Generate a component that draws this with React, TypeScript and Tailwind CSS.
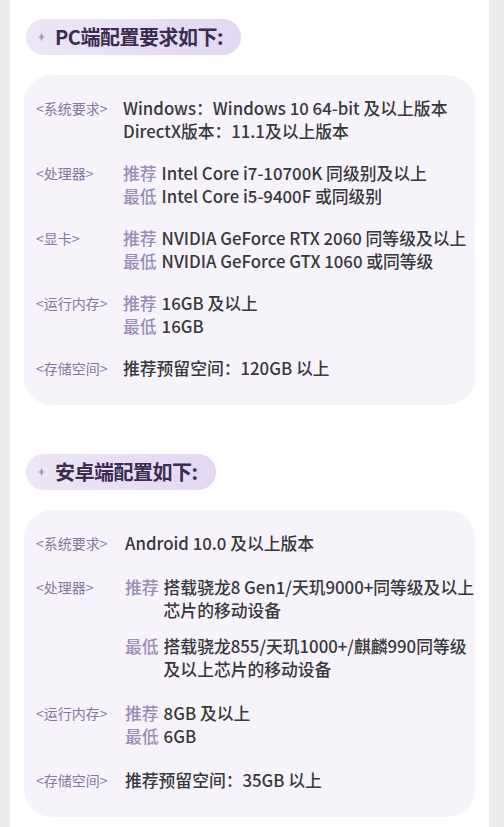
import React from "react"

type Line = { tag?: string; lines: string[] }
type Row = { label: string; items: Line[]; gap?: string }

const pcRows: Row[] = [
  { label: "<系统要求>", items: [{ lines: ["Windows：Windows 10 64-bit 及以上版本"] }, { lines: ["DirectX版本：11.1及以上版本"] }] },
  { label: "<处理器>", items: [{ tag: "推荐", lines: ["Intel Core i7-10700K 同级别及以上"] }, { tag: "最低", lines: ["Intel Core i5-9400F 或同级别"] }] },
  { label: "<显卡>", items: [{ tag: "推荐", lines: ["NVIDIA GeForce RTX 2060 同等级及以上"] }, { tag: "最低", lines: ["NVIDIA GeForce GTX 1060 或同等级"] }] },
  { label: "<运行内存>", items: [{ tag: "推荐", lines: ["16GB 及以上"] }, { tag: "最低", lines: ["16GB"] }] },
  { label: "<存储空间>", items: [{ lines: ["推荐预留空间：120GB 以上"] }] },
]

const androidRows: Row[] = [
  { label: "<系统要求>", items: [{ lines: ["Android 10.0 及以上版本"] }] },
  {
    label: "<处理器>",
    gap: "gap-[13px]",
    items: [
      { tag: "推荐", lines: ["搭载骁龙8 Gen1/天玑9000+同等级及以上", "芯片的移动设备"] },
      { tag: "最低", lines: ["搭载骁龙855/天玑1000+/麒麟990同等级", "及以上芯片的移动设备"] },
    ],
  },
  { label: "<运行内存>", items: [{ tag: "推荐", lines: ["8GB 及以上"] }, { tag: "最低", lines: ["6GB"] }] },
  { label: "<存储空间>", items: [{ lines: ["推荐预留空间：35GB 以上"] }] },
]

function Sparkle() {
  return (
    <svg viewBox="0 0 10 14" className="w-[7px] h-[10px] shrink-0" fill="#a897c8">
      <path d="M5 0 Q5.7 6.2 10 7 Q5.7 7.8 5 14 Q4.3 7.8 0 7 Q4.3 6.2 5 0Z" />
    </svg>
  )
}

function Pill({ title }: { title: string }) {
  return (
    <div className="ml-[2px] inline-flex items-center gap-[10px] h-[36px] pl-[12px] pr-[18px] rounded-full bg-gradient-to-r from-[#ede6f6] to-[#e2d8f3]">
      <Sparkle />
      <span className="text-[20px] font-bold leading-none text-[#3b2c50] tracking-[-0.5px]">{title}</span>
    </div>
  )
}

function Card({ rows, labelWidth, gap, pt, pb }: { rows: Row[]; labelWidth: string; gap: string; pt: string; pb: string }) {
  return (
    <div className={`rounded-[28px] bg-[#f6f3fb] pl-[12px] pr-[8px] flex flex-col ${gap} ${pt} ${pb}`}>
      {rows.map((row) => (
        <div key={row.label} className="flex">
          <div className={`${labelWidth} shrink-0 text-[14px] leading-[23px] text-[#8677a2]`}>{row.label}</div>
          <div className={`flex flex-col ${row.gap ?? ""}`}>
            {row.items.map((item, i) => (
              <div key={i} className="flex gap-[5px] text-[16.8px] leading-[23px] font-medium whitespace-nowrap">
                {item.tag && <span className="text-[#9b8cb8]">{item.tag}</span>}
                <div className="flex flex-col text-[#38383a]">
                  {item.lines.map((l) => (
                    <span key={l}>{l}</span>
                  ))}
                </div>
              </div>
            ))}
          </div>
        </div>
      ))}
    </div>
  )
}

export default function App() {
  return (
    <div
      className="h-[827px] overflow-hidden bg-[#eceaed] pl-[10px] pr-[15px]"
      style={{ fontFamily: '"Noto Sans CJK SC", "Noto Sans", sans-serif' }}
    >
      <div className="h-full bg-white px-[14px] pt-[19px]">
        {/* PC */}
        <Pill title="PC端配置要求如下:" />
        <div className="mt-[20px]">
          <Card rows={pcRows} labelWidth="w-[87px]" gap="gap-[19px]" pt="pt-[22px]" pb="pb-[25px]" />
        </div>

        {/* Android */}
        <div className="mt-[49px]">
          <Pill title="安卓端配置如下:" />
        </div>
        <div className="mt-[20px]">
          <Card rows={androidRows} labelWidth="w-[89px]" gap="gap-[21px]" pt="pt-[22px]" pb="pb-[25px]" />
        </div>
      </div>
    </div>
  )
}
